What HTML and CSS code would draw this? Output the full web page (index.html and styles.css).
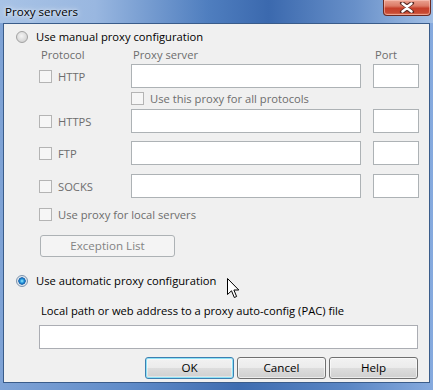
FILE: index.html
```html
<!DOCTYPE html>
<html lang="en">
<head>
  <meta charset="UTF-8">
  <title>Proxy servers</title>
  <link rel="stylesheet" href="styles.css">
</head>
<body>
  <div class="window">
    <div class="titlebar">
      <span class="title">Proxy servers</span>
      <button class="close" type="button" aria-label="Close">
        <svg width="16" height="11" viewBox="0 0 16 11">
          <path d="M3 1 L8 4.5 L13 1 M3 10 L8 6.5 L13 10" stroke="#5a2a24" stroke-width="4.2" fill="none" stroke-linecap="round"/>
          <path d="M3.5 1.5 L8 5 L12.5 1.5 M3.5 9.5 L8 6 L12.5 9.5" stroke="#ffffff" stroke-width="2.4" fill="none" stroke-linecap="round"/>
        </svg>
      </button>
    </div>

    <div class="client">
      <div class="option">
        <span class="radio"></span>
        <span>Use manual proxy configuration</span>
      </div>

      <div class="proxy-table">
        <div class="proxy-head">
          <span>Protocol</span>
          <span>Proxy server</span>
          <span class="port-label">Port</span>
        </div>
        <div class="proxy-row row-http">
          <span class="check-label"><span class="checkbox"></span>HTTP</span>
          <input type="text" disabled>
          <input type="text" disabled>
        </div>
        <div class="proxy-all">
          <span class="check-label"><span class="checkbox"></span>Use this proxy for all protocols</span>
        </div>
        <div class="proxy-row row-https">
          <span class="check-label"><span class="checkbox"></span>HTTPS</span>
          <input type="text" disabled>
          <input type="text" disabled>
        </div>
        <div class="proxy-row row-ftp">
          <span class="check-label"><span class="checkbox"></span>FTP</span>
          <input type="text" disabled>
          <input type="text" disabled>
        </div>
        <div class="proxy-row row-socks">
          <span class="check-label"><span class="checkbox"></span>SOCKS</span>
          <input type="text" disabled>
          <input type="text" disabled>
        </div>
        <div class="proxy-local">
          <span class="check-label"><span class="checkbox"></span>Use proxy for local servers</span>
        </div>
      </div>

      <button class="btn btn-exception" type="button" disabled>Exception List</button>

      <div class="option option-auto">
        <span class="radio checked"></span>
        <span>Use automatic proxy configuration</span>
      </div>

      <div class="pac-label">Local path or web address to a proxy auto-config (PAC) file</div>
      <input class="pac-input" type="text">

      <div class="actions">
        <button class="btn btn-default" type="button">OK</button>
        <button class="btn" type="button">Cancel</button>
        <button class="btn" type="button">Help</button>
      </div>

      <svg class="cursor" width="13" height="21" viewBox="0 0 13 21">
        <path d="M0.5 0.5 L0.5 16.5 L4.5 12.8 L7.3 19.5 L9.6 18.5 L6.9 12 L11.8 12 Z" fill="#ffffff" stroke="#000000" stroke-width="1" stroke-linejoin="miter"/>
      </svg>
    </div>
  </div>
</body>
</html>
```

FILE: styles.css
```css
body {
  margin: 0;
  font-family: "Open Sans", "Noto Sans", sans-serif;
  font-size: 11.2px;
}
.window {
  width: 433px;
  height: 390px;
  box-sizing: border-box;
  padding-bottom: 7px;
  background: linear-gradient(90deg, #7fa3d6 0%, #5f8bc8 30%, #3e6cb0 55%, #5a86c4 80%, #86aade 100%);
}
.titlebar {
  height: 23px;
  display: flex;
  justify-content: space-between;
  align-items: flex-start;
  background: linear-gradient(90deg, #a8c3e6 0%, #99b7e0 22%, #4f7ebf 48%, #3b69ae 62%, #6890c9 82%, #a2bfe5 100%);
}
.title {
  margin: 4px 0 0 5px;
  line-height: 15px;
  font-size: 11.6px;
  color: #000;
  text-shadow: 0 0 6px rgba(255, 255, 255, 0.9), 0 0 3px rgba(255, 255, 255, 0.8);
}
.close {
  width: 48px;
  height: 16px;
  margin-right: 2px;
  padding: 0;
  border: 1px solid #6b2a22;
  border-top: none;
  border-radius: 0 0 4px 4px;
  background: linear-gradient(180deg, #eba392 0%, #dc7a66 40%, #c63f2a 55%, #c84a33 85%, #e07e62 100%);
  box-shadow: inset 0 0 0 1px rgba(255, 210, 200, 0.5);
  display: flex;
  align-items: center;
  justify-content: center;
}
.client {
  position: relative;
  height: 360px;
  margin: 0 3px;
  box-sizing: border-box;
  border: 1px solid #3a5c8a;
  background: #f0f0f0;
  color: #000;
  display: flex;
  flex-direction: column;
  align-items: flex-start;
}
.option {
  display: flex;
  align-items: center;
  gap: 8px;
  height: 14px;
  line-height: 14px;
  margin: 6px 0 0 12px;
}
.radio {
  width: 12px;
  height: 12px;
  box-sizing: border-box;
  border-radius: 50%;
  border: 1px solid #a2a2a2;
  background: radial-gradient(circle at 45% 40%, #f4f4f4 0%, #dcdcdc 55%, #c8c8c8 100%);
}
.radio.checked {
  border-color: #7d94ae;
  background: radial-gradient(circle at 50% 50%, #9ff0ff 0%, #2f9fe0 25%, #0e5aa8 48%, #e3e9ef 56%, #d4dbe2 100%);
}
.proxy-table {
  margin-left: 35px;
  color: #6d6d6d;
}
.proxy-head,
.proxy-row {
  display: grid;
  grid-template-columns: 80px 230px 46px;
  column-gap: 12px;
  align-items: center;
}
.proxy-head {
  height: 15px;
  line-height: 15px;
  margin-top: 3px;
}
.proxy-head span {
  margin-left: 2px;
}
.proxy-row {
  height: 24px;
}
.row-http { margin-top: 2px; }
.row-https { margin-top: 4px; }
.row-ftp { margin-top: 8px; }
.row-socks { margin-top: 9px; }
.proxy-all {
  height: 13px;
  margin: 4px 0 0 92px;
}
.proxy-local {
  height: 13px;
  margin-top: 10px;
}
.check-label {
  display: flex;
  align-items: center;
  gap: 6px;
  height: 13px;
  line-height: 13px;
}
.checkbox {
  width: 13px;
  height: 13px;
  box-sizing: border-box;
  border: 1px solid #b4b4b4;
  background: #f6f6f6;
}
input {
  height: 24px;
  box-sizing: border-box;
  border: 1px solid #adb2b5;
  background: #fff;
  margin: 0;
  padding: 0 3px;
  font: inherit;
}
.btn {
  height: 22px;
  box-sizing: border-box;
  border: 1px solid #707070;
  border-radius: 3px;
  background: linear-gradient(180deg, #f2f2f2 0%, #ebebeb 50%, #dddddd 51%, #cfcfcf 100%);
  box-shadow: inset 0 0 0 1px rgba(255, 255, 255, 0.6);
  font: inherit;
  font-size: 11.6px;
  color: #000;
  padding: 0;
  line-height: 18px;
}
.btn-exception {
  width: 135px;
  margin: 14px 0 0 36px;
  border-color: #adb2b5;
  background: #f4f4f4;
  color: #838383;
  box-shadow: none;
}
.option-auto {
  margin-top: 17px;
}
.pac-label {
  height: 14px;
  line-height: 14px;
  margin: 16px 0 0 37px;
}
.pac-input {
  width: 379px;
  margin: 7px 0 0 35px;
  border-color: #abadb3;
}
.actions {
  align-self: stretch;
  display: flex;
  justify-content: flex-end;
  gap: 3px;
  margin-top: 8px;
  padding-right: 11px;
}
.actions .btn {
  width: 89px;
}
.btn-default {
  border-color: #3c7fb1;
  box-shadow: inset 0 0 0 1px #8fe3f7, inset 0 0 0 2px rgba(255, 255, 255, 0.4);
}
.cursor {
  position: absolute;
  left: 223px;
  top: 254px;
}
```
